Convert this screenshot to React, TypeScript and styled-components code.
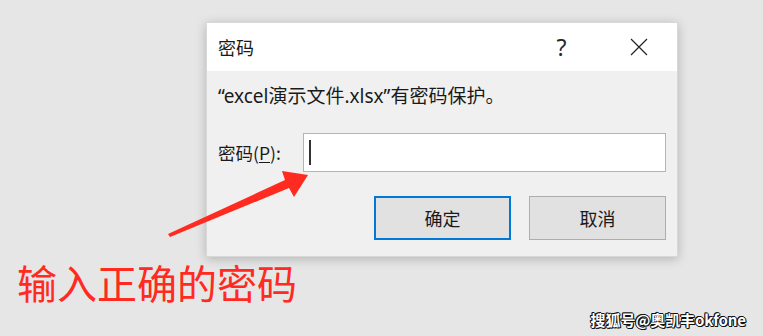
import styled, { createGlobalStyle } from "styled-components";

const GlobalStyle = createGlobalStyle`
  html, body {
    margin: 0;
    padding: 0;
    background: #e6e6e6;
  }
  body {
    font-family: "Noto Sans CJK SC", "Noto Sans", sans-serif;
  }
`;

const Page = styled.div`
  position: relative;
  width: 763px;
  height: 336px;
  overflow: hidden;
  background: #e6e6e6;
  display: flex;
  flex-direction: column;
  padding-top: 22px;
  box-sizing: border-box;
`;

const Dialog = styled.div`
  margin-left: 206px;
  width: 472px;
  height: 235px;
  background: #f0f0f0;
  border: 1px solid #d8d8d8;
  box-sizing: border-box;
  box-shadow: 0 2px 10px rgba(0, 0, 0, 0.22);
  display: flex;
  flex-direction: column;
`;

const TitleBar = styled.div`
  height: 48px;
  background: #ffffff;
  display: flex;
  align-items: center;
  padding-left: 11px;
  color: #1a1a1a;
`;

const Title = styled.div`
  flex: 1;
  font-size: 18px;
`;

const TitleButton = styled.div`
  width: 77px;
  height: 48px;
  display: flex;
  align-items: center;
  justify-content: center;
  font-size: 23px;
  font-family: "Noto Sans", "DejaVu Sans", sans-serif;
  font-weight: 400;
  color: #2a2a2a;
`;

const Body = styled.div`
  flex: 1;
  padding: 12px 11px 0 11px;
  display: flex;
  flex-direction: column;
`;

const Message = styled.div`
  font-family: "Noto Sans", "Noto Sans CJK SC", sans-serif;
  font-size: 19px;
  color: #1a1a1a;
  line-height: 26px;
`;

const Row = styled.div`
  margin-top: 24px;
  display: flex;
  align-items: center;
`;

const Label = styled.label`
  font-size: 17.5px;
  color: #1a1a1a;
  width: 85px;
`;

const Underline = styled.span`
  text-decoration: underline;
  text-underline-offset: 2px;
`;

const Field = styled.div`
  width: 364px;
  height: 39px;
  background: #ffffff;
  border: 1px solid #b4b4b4;
  box-sizing: border-box;
  display: flex;
  align-items: center;
  padding-left: 5px;
`;

const Caret = styled.div`
  width: 2px;
  height: 25px;
  background: #333;
`;

const Buttons = styled.div`
  margin-top: 24px;
  display: flex;
  justify-content: flex-end;
  gap: 18px;
`;

const Button = styled.button<{ $primary?: boolean }>`
  width: 137px;
  height: 44px;
  background: #e1e1e1;
  border: ${(p) => (p.$primary ? "2px solid #0078d7" : "1px solid #adadad")};
  box-sizing: border-box;
  font-family: "Noto Sans CJK SC", sans-serif;
  font-size: 18px;
  color: #1a1a1a;
  padding: 0;
`;

const Callout = styled.div`
  margin-left: 17px;
  font-size: 40px;
  line-height: 50px;
  color: #ff2a20;
`;

const Arrow = styled.svg`
  position: absolute;
  left: 0;
  top: 0;
  pointer-events: none;
`;

const Watermark = styled.div`
  position: absolute;
  right: 17px;
  bottom: 6px;
  font-size: 15px;
  color: #ffffff;
  font-weight: 700;
  letter-spacing: -0.1px;
  text-shadow: -1px 0 #111, 1px 0 #111, 0 -1px #111, 0 1px #111,
    1px 1px #111, -1px -1px #111;
`;

export default function App() {
  return (
    <>
      <GlobalStyle />
      <Page>
        <Dialog>
          <TitleBar>
            <Title>密码</Title>
            <TitleButton>?</TitleButton>
            <TitleButton>
              <svg width="18" height="18" viewBox="0 0 18 18">
                <path d="M1 1 L17 17 M17 1 L1 17" stroke="#222" strokeWidth="1.2" fill="none" />
              </svg>
            </TitleButton>
          </TitleBar>
          <Body>
            <Message>“excel演示文件.xlsx”有密码保护。</Message>
            <Row>
              <Label>
                密码(<Underline>P</Underline>):
              </Label>
              <Field>
                <Caret />
              </Field>
            </Row>
            <Buttons>
              <Button $primary>确定</Button>
              <Button>取消</Button>
            </Buttons>
          </Body>
        </Dialog>
        <Callout>输入正确的密码</Callout>
        <Arrow width="763" height="336" viewBox="0 0 763 336">
          <path d="M168 234 L285 180 L282 171 L308 175 L294 197 L289 188 L170 237 Z" fill="#ff2a20" />
        </Arrow>
        <Watermark>搜狐号@奥凯丰okfone</Watermark>
      </Page>
    </>
  );
}
